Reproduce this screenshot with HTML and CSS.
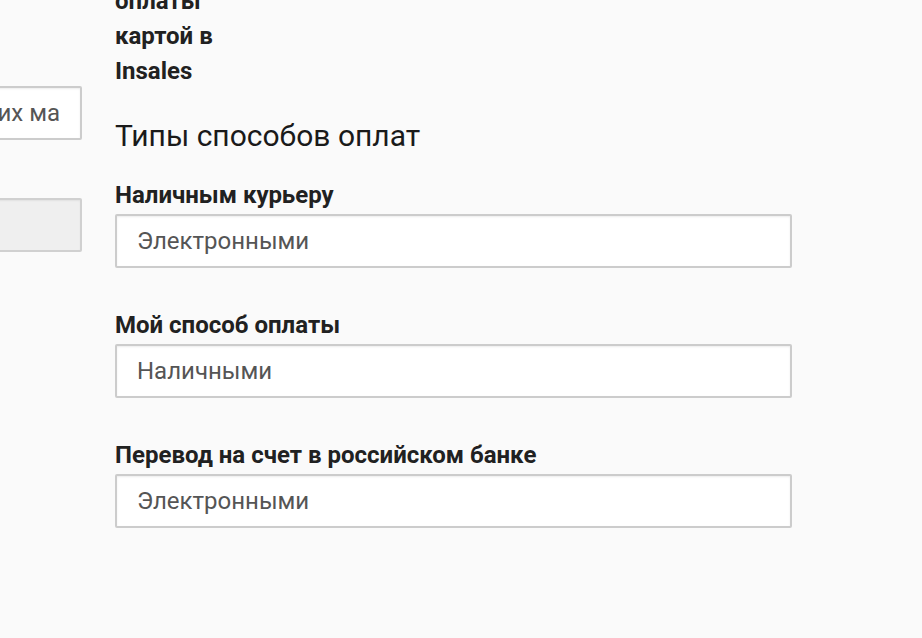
FILE: index.html
```html
<!DOCTYPE html>
<html lang="ru">
<head>
    <meta charset="UTF-8">
    <meta name="viewport" content="width=device-width, initial-scale=1.0">
    <title>Способы оплаты</title>
    <link rel="stylesheet" href="styles.css">
</head>
<body>
    <div class="page">
        <div class="side">
            <input class="field side-field" type="text" value="Для других ма" readonly>
            <div class="side-box"></div>
        </div>

        <div class="main">
            <div class="title">Способ<br>оплаты<br>картой в<br>Insales</div>

            <h2>Типы способов оплат</h2>

            <div class="group">
                <label for="pay1">Наличным курьеру</label>
                <input class="field" type="text" id="pay1" value="Электронными" readonly>
            </div>

            <div class="group">
                <label for="pay2">Мой способ оплаты</label>
                <input class="field" type="text" id="pay2" value="Наличными" readonly>
            </div>

            <div class="group">
                <label for="pay3">Перевод на счет в российском банке</label>
                <input class="field" type="text" id="pay3" value="Электронными" readonly>
            </div>
        </div>
    </div>
</body>
</html>
```

FILE: styles.css
```css
body {
    margin: 0;
    background-color: #fafafa;
    font-family: 'Roboto', sans-serif;
    color: #212121;
    overflow: hidden;
}

.page {
    display: flex;
    gap: 33px;
    margin-top: -51px;
    margin-left: -219px;
}

.side {
    width: 301px;
    flex-shrink: 0;
    padding-top: 137px;
}

.main {
    width: 677px;
    flex-shrink: 0;
}

.title {
    font-size: 24px;
    font-weight: 700;
    line-height: 35px;
}

h2 {
    font-size: 30px;
    font-weight: 400;
    line-height: 35px;
    color: #1a1a1a;
    margin: 29px 0 28px 0;
}

.group {
    margin-bottom: 43px;
}

label {
    display: block;
    font-size: 24px;
    font-weight: 700;
    line-height: 28px;
    margin-bottom: 5px;
}

.field {
    display: block;
    box-sizing: border-box;
    width: 100%;
    height: 54px;
    padding: 0 20px;
    border: 2px solid #cccccc;
    border-radius: 2px;
    box-shadow: inset 0 1px 2px rgba(0, 0, 0, 0.08);
    background-color: #fff;
    font-family: 'Roboto', sans-serif;
    font-size: 24px;
    color: #555;
    outline: none;
}

.side-field {
    text-align: right;
}

.side-box {
    margin-top: 58px;
    height: 54px;
    border: 2px solid #d0d0d0;
    border-radius: 2px;
    box-shadow: inset 0 1px 2px rgba(0, 0, 0, 0.06);
    background-color: #efefef;
    box-sizing: border-box;
}
```
